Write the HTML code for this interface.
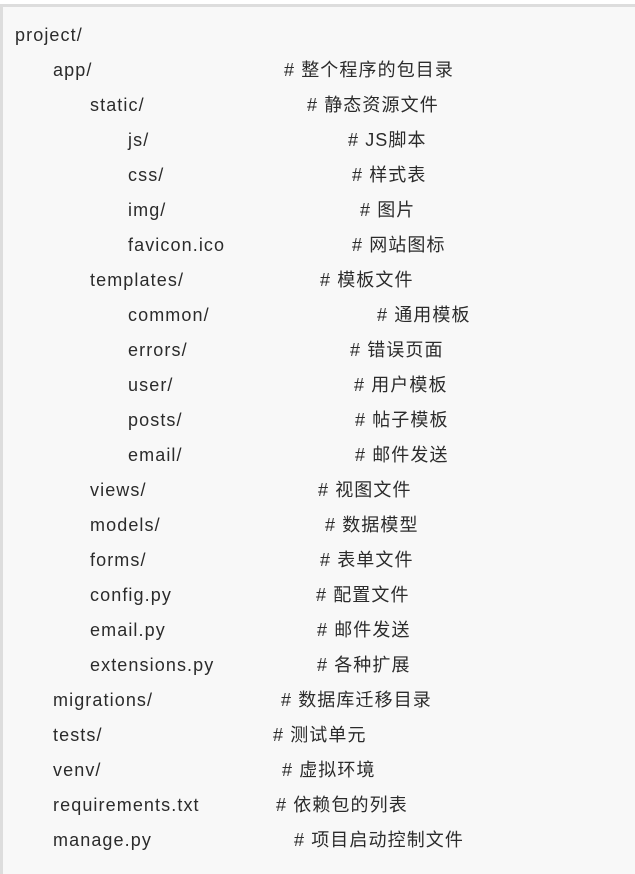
<!DOCTYPE html><html><head><meta charset="utf-8"><style>
body{margin:0;width:635px;height:865px;background:#fff;overflow:hidden}
.box{position:absolute;left:0;top:4px;width:640px;height:870px;background:#f8f8f8;border-top:3px solid #ddd;border-left:3px solid #ddd;box-sizing:border-box}
.l{position:absolute;font:18px "Liberation Sans","Noto Sans CJK SC",sans-serif;letter-spacing:1.1px;color:#2b2b2b;white-space:nowrap;line-height:24px}
</style></head><body><div class="box"></div>
<div class="l" style="left:15px;top:23px">project/</div>
<div class="l" style="left:53px;top:58px">app/</div><div class="l" style="left:284px;top:58px"># 整个程序的包目录</div>
<div class="l" style="left:90px;top:93px">static/</div><div class="l" style="left:307px;top:93px"># 静态资源文件</div>
<div class="l" style="left:128px;top:128px">js/</div><div class="l" style="left:348px;top:128px"># JS脚本</div>
<div class="l" style="left:128px;top:163px">css/</div><div class="l" style="left:352px;top:163px"># 样式表</div>
<div class="l" style="left:128px;top:198px">img/</div><div class="l" style="left:360px;top:198px"># 图片</div>
<div class="l" style="left:128px;top:233px">favicon.ico</div><div class="l" style="left:352px;top:233px"># 网站图标</div>
<div class="l" style="left:90px;top:268px">templates/</div><div class="l" style="left:320px;top:268px"># 模板文件</div>
<div class="l" style="left:128px;top:303px">common/</div><div class="l" style="left:377px;top:303px"># 通用模板</div>
<div class="l" style="left:128px;top:338px">errors/</div><div class="l" style="left:350px;top:338px"># 错误页面</div>
<div class="l" style="left:128px;top:373px">user/</div><div class="l" style="left:354px;top:373px"># 用户模板</div>
<div class="l" style="left:128px;top:408px">posts/</div><div class="l" style="left:355px;top:408px"># 帖子模板</div>
<div class="l" style="left:128px;top:443px">email/</div><div class="l" style="left:355px;top:443px"># 邮件发送</div>
<div class="l" style="left:90px;top:478px">views/</div><div class="l" style="left:318px;top:478px"># 视图文件</div>
<div class="l" style="left:90px;top:513px">models/</div><div class="l" style="left:325px;top:513px"># 数据模型</div>
<div class="l" style="left:90px;top:548px">forms/</div><div class="l" style="left:320px;top:548px"># 表单文件</div>
<div class="l" style="left:90px;top:583px">config.py</div><div class="l" style="left:316px;top:583px"># 配置文件</div>
<div class="l" style="left:90px;top:618px">email.py</div><div class="l" style="left:317px;top:618px"># 邮件发送</div>
<div class="l" style="left:90px;top:653px">extensions.py</div><div class="l" style="left:317px;top:653px"># 各种扩展</div>
<div class="l" style="left:53px;top:688px">migrations/</div><div class="l" style="left:281px;top:688px"># 数据库迁移目录</div>
<div class="l" style="left:53px;top:723px">tests/</div><div class="l" style="left:273px;top:723px"># 测试单元</div>
<div class="l" style="left:53px;top:758px">venv/</div><div class="l" style="left:282px;top:758px"># 虚拟环境</div>
<div class="l" style="left:53px;top:793px">requirements.txt</div><div class="l" style="left:276px;top:793px"># 依赖包的列表</div>
<div class="l" style="left:53px;top:828px">manage.py</div><div class="l" style="left:294px;top:828px"># 项目启动控制文件</div>
</body></html>
